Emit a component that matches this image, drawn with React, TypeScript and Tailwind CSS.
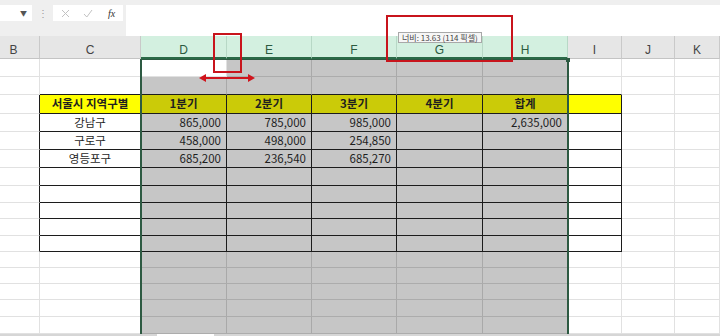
const COLS = ["B", "C", "D", "E", "F", "G", "H", "I", "J", "K"];

const WIDTHS = [
  "w-[40px]",
  "w-[101px]",
  "w-[86px]",
  "w-[85px]",
  "w-[85px]",
  "w-[86px]",
  "w-[85px]",
  "w-[54px]",
  "w-[53px]",
  "w-[45px]",
];

const HEIGHTS = [
  "h-[18px]",
  "h-[18px]",
  "h-[19px]",
  "h-[18px]",
  "h-[18px]",
  "h-[18px]",
  "h-[18px]",
  "h-[17px]",
  "h-[16px]",
  "h-[17px]",
  "h-[16px]",
  "h-[16px]",
  "h-[16px]",
  "h-[16px]",
  "h-[17px]",
  "h-[17px]",
];

// row number -> cell texts for B..K
const DATA: Record<number, string[]> = {
  3: ["", "서울시 지역구별", "1분기", "2분기", "3분기", "4분기", "합계"],
  4: ["", "강남구", "865,000", "785,000", "985,000", "", "2,635,000"],
  5: ["", "구로구", "458,000", "498,000", "254,850"],
  6: ["", "영등포구", "685,200", "236,540", "685,270"],
};

function cellClass(r: number, c: number) {
  const inTable = r >= 3 && r <= 11 && c >= 1 && c <= 7;
  const sel = c >= 2 && c <= 6 && !(r === 1 && c === 2);

  let bg = "bg-white";
  if (r === 3 && (c === 1 || c === 7)) bg = "bg-[#ffff00]";
  else if (r === 3 && sel) bg = "bg-[#cbcb08]";
  else if (sel) bg = "bg-[#c6c6c6]";

  const rightBlack = inTable || (c === 0 && r >= 3 && r <= 11);
  const bottomBlack = inTable || (r === 2 && c >= 1 && c <= 7);

  const right = rightBlack
    ? "border-r-[#1c1c1c]"
    : sel
      ? "border-r-[#a9a9a9]"
      : "border-r-[#e1e1e1]";
  const bottom = bottomBlack
    ? "border-b-[#1c1c1c]"
    : sel
      ? "border-b-[#acacac]"
      : "border-b-[#e1e1e1]";

  let align = "justify-end pr-[5px]";
  if (r === 3) align = "justify-center font-bold";
  else if (c === 1) align = "justify-center";

  return `${bg} ${right} ${bottom} ${align}`;
}

function XIcon() {
  return (
    <svg width="9" height="9" viewBox="0 0 9 9">
      <path d="M1 1L8 8M8 1L1 8" stroke="#c2c2c2" strokeWidth="1" fill="none" />
    </svg>
  );
}

function CheckIcon() {
  return (
    <svg width="10" height="9" viewBox="0 0 10 9">
      <path d="M1 5L3.8 8L9 1" stroke="#c2c2c2" strokeWidth="1" fill="none" />
    </svg>
  );
}

function DoubleArrow() {
  return (
    <svg width="56" height="10" viewBox="0 0 56 10">
      <line x1="5" y1="5" x2="51" y2="5" stroke="#d0141c" strokeWidth="2" />
      <path d="M0 5L7 1V9Z" fill="#d0141c" />
      <path d="M56 5L49 1V9Z" fill="#d0141c" />
    </svg>
  );
}

export default function App() {
  return (
    <div className="relative h-[336px] w-[720px] overflow-hidden bg-white font-['Noto_Sans_CJK_KR','Liberation_Sans',sans-serif] text-[#1f1f1f]">
      {/* formula bar */}
      <div className="flex h-[36px] items-start bg-[#efefef] pt-[5px]">
        <div className="flex h-[16px] w-[32px] items-center justify-end bg-white pr-[5px] text-[7px] text-[#555]">
          ▼
        </div>
        <div className="flex h-[16px] w-[21px] items-center justify-center text-[10px] leading-none text-[#9a9a9a]">
          ⋮
        </div>
        <div className="flex h-[16px] w-[70px] items-center bg-white">
          <span className="flex w-[23px] justify-center pl-[2px]">
            <XIcon />
          </span>
          <span className="flex w-[24px] justify-center">
            <CheckIcon />
          </span>
          <span className="flex w-[23px] justify-center font-['Liberation_Serif',serif] text-[10px] italic text-[#333]">
            fx
          </span>
        </div>
        <div className="ml-[3px] h-[31px] flex-1 bg-white" />
      </div>

      {/* column headers */}
      <div className="flex h-[23px]">
        {COLS.map((col, c) => {
          const sel = c >= 2 && c <= 6;
          return (
            <div
              key={col}
              className={`${WIDTHS[c]} flex shrink-0 items-center justify-center border-r pt-[6px] font-['Liberation_Sans',sans-serif] text-[12px] leading-none ${
                sel
                  ? "border-r-[#b7d8c6] border-b-2 border-b-[#2a6a47] bg-[#d3f0e0] text-[#2b5a40]"
                  : "border-r-[#c9c9c9] border-b border-b-[#c4c4c4] bg-[#e6e6e6] text-[#444]"
              } ${c === 0 ? "pr-[12px]" : ""}`}
            >
              {col}
            </div>
          );
        })}
      </div>

      {/* cells */}
      <div className="relative">
        {HEIGHTS.map((h, i) => {
          const r = i + 1;
          const texts = DATA[r] ?? [];
          return (
            <div key={r} className={`flex ${h}`}>
              {COLS.map((col, c) => (
                <div
                  key={col}
                  className={`${WIDTHS[c]} flex shrink-0 items-center overflow-hidden whitespace-nowrap border-r border-b text-[11.5px] leading-none ${cellClass(r, c)}`}
                >
                  {texts[c] ?? ""}
                </div>
              ))}
            </div>
          );
        })}

        {/* selection outline D1:H */}
        <div className="pointer-events-none absolute left-[140px] top-0 bottom-0 w-[429px] border-x-2 border-t border-[#2d5a42]" />
        <div className="absolute left-[566px] top-[-1px] h-[4px] w-[4px] bg-[#2d5a42]" />
      </div>

      {/* horizontal scrollbar strip */}
      <div className="relative h-[2px] bg-[#d6d6d6]">
        <div className="absolute left-[157px] top-0 h-[2px] w-[57px] bg-white" />
      </div>

      {/* annotations */}
      <div className="absolute left-[213px] top-[33px] h-[40px] w-[29px] border-2 border-[#c8141c]" />
      <div className="absolute left-[386px] top-[15px] h-[47px] w-[127px] border-2 border-[#c8141c]" />
      <div className="absolute left-[398px] top-[32px] flex h-[11px] items-center whitespace-nowrap border border-[#a8a8a8] bg-[#f6f6f6] px-[3px] text-[8px] leading-none text-[#444]">
        너비: 13.63 (114 픽셀)
      </div>
      <div className="absolute left-[199px] top-[73px]">
        <DoubleArrow />
      </div>
    </div>
  );
}
